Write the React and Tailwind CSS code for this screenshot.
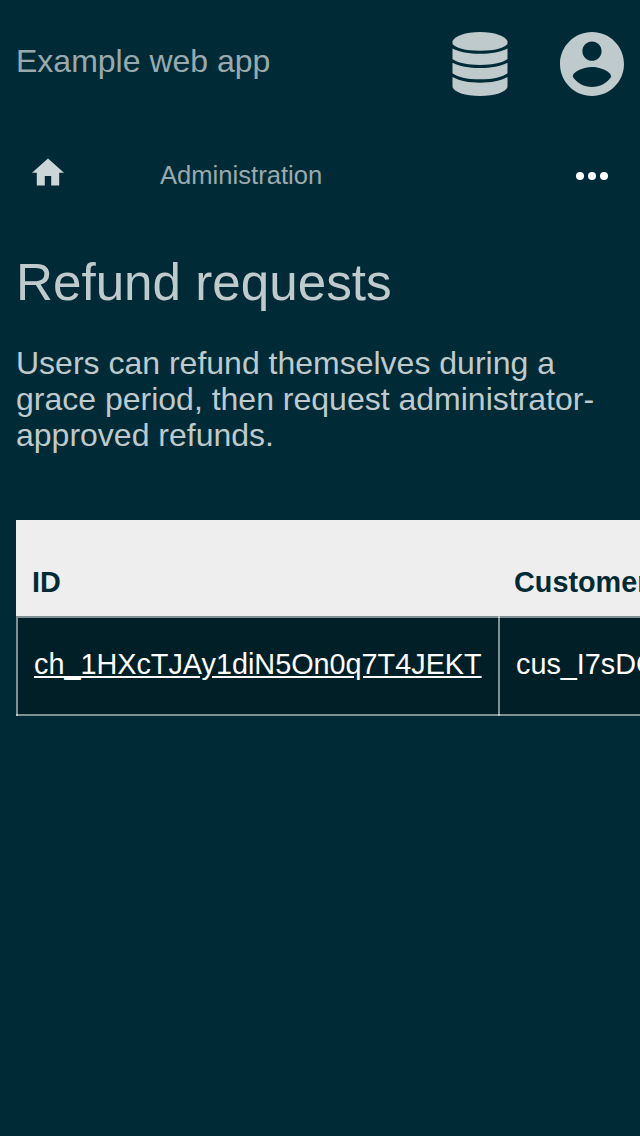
function DatabaseIcon({ className }) {
  return (
    <svg viewBox="0 0 56 64" className={className} fill="currentColor" aria-hidden="true">
      <path d="M28 0C43 0 53 4 55.5 9V11.8C53 16 43 18.8 28 18.8S3 16 .5 11.8V9C3 4 13 0 28 0Z" />
      <path d="M.5 16.4C7 20 17 21.7 28 21.7S49 20 55.5 16.4V27C51 30.5 41 32.9 28 32.9S5 30.5 .5 27Z" />
      <path d="M.5 30.7C7 34.3 17 36 28 36S49 34.3 55.5 30.7V41.2C51 45 41 47.3 28 47.3S5 45 .5 41.2Z" />
      <path d="M.5 45C7 48.8 17 50.7 28 50.7S49 48.8 55.5 45V55C54 60 43 64 28 64S2 60 .5 55Z" />
    </svg>
  );
}

function AccountIcon({ className }) {
  return (
    <svg viewBox="2 2 20 20" className={className} fill="currentColor" aria-hidden="true">
      <path d="M12 2C6.48 2 2 6.48 2 12s4.48 10 10 10 10-4.48 10-10S17.52 2 12 2zm0 3c1.66 0 3 1.34 3 3s-1.34 3-3 3-3-1.34-3-3 1.34-3 3-3zm0 14.2c-2.5 0-4.71-1.28-6-3.22.03-1.99 4-3.08 6-3.08 1.99 0 5.97 1.09 6 3.08-1.29 1.94-3.5 3.22-6 3.22z" />
    </svg>
  );
}

function HomeIcon({ className }) {
  return (
    <svg viewBox="2 2.75 20 17.5" className={className} fill="currentColor" aria-hidden="true">
      <path d="M10 20v-6h4v6h5v-8h3L12 3 2 12h3v8z" />
    </svg>
  );
}

export default function App() {
  return (
    <div className="flex h-[1136px] w-[640px] flex-col overflow-hidden bg-[#002b36] font-['Liberation_Sans',Arial,sans-serif] text-[#bfcacd]">
      <header className="flex h-32 items-center justify-between px-4">
        <span className="pb-1.5 text-[32px] leading-9 text-[#99aaaf]">Example web app</span>
        <div className="flex items-center gap-[52px]">
          <DatabaseIcon className="h-16 w-14" />
          <AccountIcon className="size-16" />
        </div>
      </header>
      <nav className="flex h-24 items-center px-8">
        <HomeIcon className="mb-2 h-7 w-8 text-[#ccd5d7]" />
        <span className="ml-24 pb-0.5 text-[25.6px] leading-8 text-[#99aaaf]">Administration</span>
        <div className="ml-auto flex gap-1">
          <span className="size-2 rounded-full bg-white" />
          <span className="size-2 rounded-full bg-white" />
          <span className="size-2 rounded-full bg-white" />
        </div>
      </nav>
      <main className="pl-4">
        <h1 className="mt-[29px] text-[51.2px] leading-[60px]">Refund requests</h1>
        <p className="mt-8 w-[600px] text-[32px] leading-9">
          Users can refund themselves during a grace period, then request administrator-approved refunds.
        </p>
        <div className="mt-[67px] overflow-hidden">
          <table className="w-[1100px] table-fixed border-separate border-spacing-0 text-left text-[28.8px] leading-8">
            <thead>
              <tr className="h-24 bg-[#eee] text-[#002b36]">
                <th className="w-[482px] pt-7 pl-4">ID</th>
                <th className="pt-7 pl-4">Customer</th>
              </tr>
            </thead>
            <tbody>
              <tr className="h-[100px] bg-[#001f27] text-white">
                <td className="border-y-2 border-l-2 border-white/50 pb-1 pl-4 [background:linear-gradient(#ffffff80,#ffffff80)_left_bottom/2px_2px_no-repeat_border-box]">
                  <a className="underline">ch_1HXcTJAy1diN5On0q7T4JEKT</a>
                </td>
                <td className="border-y-2 border-l-2 border-white/50 pb-1 pl-4 [background:linear-gradient(#ffffff80,#ffffff80)_left_top/2px_2px_no-repeat_border-box,linear-gradient(#ffffff80,#ffffff80)_left_bottom/2px_2px_no-repeat_border-box]">
                  cus_I7sDGq
                </td>
              </tr>
            </tbody>
          </table>
        </div>
      </main>
    </div>
  );
}
